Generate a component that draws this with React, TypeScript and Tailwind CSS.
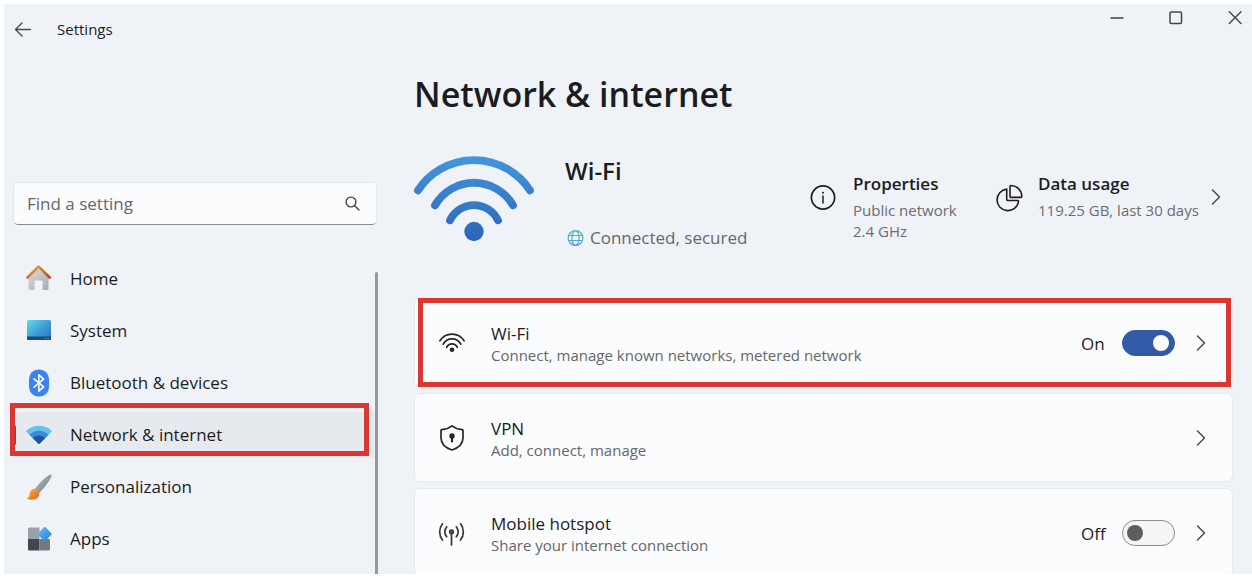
import type { ReactNode } from "react";

function HomeIcon() {
  return (
    <svg width="26" height="28" viewBox="0 0 26 28" aria-hidden="true">
      <defs>
        <linearGradient id="home-wall" x1="0" y1="0" x2="1" y2="1">
          <stop offset="0" stopColor="#dcdddf" />
          <stop offset="1" stopColor="#a9abae" />
        </linearGradient>
        <linearGradient id="home-roof" x1="0" y1="0" x2="1" y2="1">
          <stop offset="0" stopColor="#f0a63c" />
          <stop offset="1" stopColor="#c4421f" />
        </linearGradient>
      </defs>
      <path d="M2.500 12.500 12.500 3l10 9.500v11a1.500 1.500 0 0 1-1.500 1.500h-4.500v-8.500a1 1 0 0 0-1-1h-6a1 1 0 0 0-1 1V25H4A1.500 1.500 0 0 1 2.500 23.500z" fill="url(#home-wall)" />
      <path d="M1.500 12.500 11.800 2.100a1 1 0 0 1 1.400 0L23.700 12.500" fill="none" stroke="url(#home-roof)" strokeWidth="2.600" strokeLinecap="round" />
    </svg>
  );
}

function SystemIcon() {
  return (
    <svg width="26" height="26" viewBox="0 0 26 26" aria-hidden="true">
      <defs>
        <linearGradient id="system-screen" x1="0" y1="0" x2="1" y2="1">
          <stop offset="0" stopColor="#5fdde4" />
          <stop offset="0.500" stopColor="#3f9fd4" />
          <stop offset="1" stopColor="#2c6fc4" />
        </linearGradient>
      </defs>
      <rect x="1" y="2" width="24" height="20" rx="1.500" fill="url(#system-screen)" />
      <path d="M1 18.500h24v2a1.500 1.500 0 0 1-1.500 1.500h-21A1.500 1.500 0 0 1 1 20.500z" fill="#1b4c75" />
      <path d="M18.500 20.300h1.500M21.300 20.300h1.500" stroke="#6fb4dc" strokeWidth="0.800" />
    </svg>
  );
}

function BluetoothIcon() {
  return (
    <svg width="26" height="28" viewBox="0 0 26 28" aria-hidden="true">
      <rect x="3" y="0.500" width="20" height="27" rx="9.500" fill="#3b82f4" />
      <path d="M8 9.800l9.600 8-4.800 4.400V5.800l4.800 4.400-9.600 8" fill="none" stroke="#fff" strokeWidth="1.600" strokeLinejoin="round" strokeLinecap="round" />
    </svg>
  );
}

function NetworkIcon() {
  return (
    <svg width="26" height="26" viewBox="0 0 26 26" aria-hidden="true">
      <defs>
        <clipPath id="network-fan">
          <path d="M.500 8.600C3.800 5.400 8.200 3.700 13 3.700s9.200 1.700 12.500 4.900a.8.800 0 0 1 0 1.200L13.800 21.500a1.100 1.100 0 0 1-1.600 0L.500 9.800a.8.800 0 0 1 0-1.200z" />
        </clipPath>
      </defs>
      <g clipPath="url(#network-fan)">
        <rect width="26" height="26" fill="#63c3ee" />
        <circle cx="13" cy="22" r="13.300" fill="#3a8cd8" />
        <circle cx="13" cy="22" r="8.600" fill="#2653a0" />
      </g>
    </svg>
  );
}

function BrushIcon() {
  return (
    <svg width="26" height="26" viewBox="0 0 26 26" aria-hidden="true">
      <defs>
        <linearGradient id="brush-handle" x1="0" y1="0" x2="1" y2="1">
          <stop offset="0" stopColor="#c3c7cc" />
          <stop offset="1" stopColor="#6c7178" />
        </linearGradient>
        <linearGradient id="brush-tip" x1="0" y1="0" x2="1" y2="1">
          <stop offset="0" stopColor="#f8be45" />
          <stop offset="1" stopColor="#dc5a22" />
        </linearGradient>
      </defs>
      <path d="M8.800 15.300C13 9.300 18.500 3.500 23.800.700c1.200-.5 2.200.4 1.700 1.600-2.300 5.400-7.200 11.700-12.500 16.700z" fill="url(#brush-handle)" />
      <path d="M8.300 14.700c2.800 0 5 2.200 5 4.800 0 3.800-3.200 6.200-7.300 6.200-2 0-4-.4-5.300-1.300 1.800-.6 2.500-1.600 2.800-4.200.3-3.300 2-5.500 4.800-5.500z" fill="url(#brush-tip)" />
    </svg>
  );
}

function AppsIcon() {
  return (
    <svg width="26" height="26" viewBox="0 0 26 26" aria-hidden="true">
      <defs>
        <linearGradient id="apps-diamond" x1="0" y1="0" x2="1" y2="1">
          <stop offset="0" stopColor="#62c4f5" />
          <stop offset="1" stopColor="#2a7bd8" />
        </linearGradient>
      </defs>
      <path d="M3.500 1.500h10v11.500H2V3A1.500 1.500 0 0 1 3.500 1.500z" fill="#9aa0a8" />
      <path d="M2 13h11.500v11.500h-10A1.500 1.500 0 0 1 2 23z" fill="#43474d" />
      <path d="M13.500 13H24v10a1.500 1.500 0 0 1-1.500 1.500h-9z" fill="#747981" />
      <path d="M17.900 1.300a1.100 1.100 0 0 1 1.600 0l5.800 5.900a1.100 1.100 0 0 1 0 1.600l-5.800 5.900a1.100 1.100 0 0 1-1.600 0l-5.800-5.900a1.100 1.100 0 0 1 0-1.600z" fill="url(#apps-diamond)" />
    </svg>
  );
}

function LargeWifiIcon() {
  return (
    <svg className="shrink-0" width="120" height="86" viewBox="0 0 120 86" aria-hidden="true">
      <defs>
        <linearGradient id="wifi-fade" gradientUnits="userSpaceOnUse" x1="0" y1="0" x2="0" y2="86">
          <stop offset="0" stopColor="#4596de" />
          <stop offset="1" stopColor="#2b64b6" />
        </linearGradient>
      </defs>
      <g fill="none" stroke="url(#wifi-fade)" strokeWidth="7.800" strokeLinecap="round">
        <path d="M4 34.300A67 67 0 0 1 116 34.300" />
        <path d="M21 49.300A45 45 0 0 1 99 49.300" />
        <path d="M36 64.300A26.500 26.500 0 0 1 84 64.300" />
      </g>
      <circle cx="60" cy="75.500" r="9.700" fill="url(#wifi-fade)" />
    </svg>
  );
}

function GlobeIcon() {
  return (
    <svg width="17" height="17" viewBox="0 0 17 17" aria-hidden="true">
      <defs>
        <linearGradient id="globe-fade" gradientUnits="userSpaceOnUse" x1="0" y1="0" x2="0" y2="17">
          <stop offset="0" stopColor="#4cbfa4" />
          <stop offset="1" stopColor="#4a9fe0" />
        </linearGradient>
      </defs>
      <g fill="none" stroke="url(#globe-fade)" strokeWidth="1.200">
        <circle cx="8.500" cy="8" r="7.400" />
        <ellipse cx="8.500" cy="8" rx="3.600" ry="7.400" />
        <path d="M1.500 5.500h14M1.500 10.500h14" />
      </g>
    </svg>
  );
}

function InfoIcon() {
  return (
    <svg width="26" height="26" viewBox="0 0 26 26" fill="none" stroke="#1d1d1f" aria-hidden="true">
      <circle cx="13" cy="13.500" r="11.600" strokeWidth="1.700" />
      <path d="M13 12v7" strokeWidth="1.500" strokeLinecap="round" />
      <circle cx="13" cy="8.800" r="1" fill="#1d1d1f" stroke="none" />
    </svg>
  );
}

function PieIcon() {
  return (
    <svg width="28" height="28" viewBox="0 0 28 28" fill="none" stroke="#1d1d1f" strokeWidth="1.600" strokeLinejoin="round" aria-hidden="true">
      <path d="M15.900 1.500a11 11 0 0 1 10.900 11 .9.900 0 0 1-.9.900H15.900a.9.900 0 0 1-.9-.9V2.400a.9.900 0 0 1 .9-.9z" />
      <path d="M11.700 5.100A10.800 10.800 0 1 0 23.500 17.600c.1-.6-.300-1.100-.9-1.100H12.600a.9.900 0 0 1-.9-.9V5.100z" />
    </svg>
  );
}

function WifiIcon() {
  return (
    <svg width="28" height="28" viewBox="0 0 28 28" fill="none" stroke="#262626" strokeWidth="1.700" strokeLinecap="round" aria-hidden="true">
      <path d="M1.900 11.800A14.200 14.200 0 0 1 26.100 11.800" />
      <path d="M5.200 15.200A9.900 9.900 0 0 1 22.800 15.200" />
      <path d="M8.600 18.300A6 6 0 0 1 19.400 18.300" />
      <circle cx="14" cy="20.800" r="2.300" fill="#262626" stroke="none" />
    </svg>
  );
}

function ShieldIcon() {
  return (
    <svg width="28" height="28" viewBox="0 0 28 28" aria-hidden="true">
      <path d="M14 1.800c3.200 2.500 6.500 3.600 10.200 3.800a.8.800 0 0 1 .8.800v7.300c0 6-3.400 9.700-11 12.300C6.400 23.400 3 19.700 3 13.700V6.400a.8.800 0 0 1 .8-.8C7.500 5.400 10.800 4.300 14 1.800z" fill="none" stroke="#262626" strokeWidth="1.700" strokeLinejoin="round" />
      <circle cx="14" cy="12" r="2.700" fill="#262626" />
      <path d="M14 12v5.500" stroke="#262626" strokeWidth="2.200" strokeLinecap="round" />
    </svg>
  );
}

function HotspotIcon() {
  return (
    <svg width="28" height="28" viewBox="0 0 28 28" fill="none" stroke="#363636" strokeWidth="1.700" strokeLinecap="round" aria-hidden="true">
      <path d="M4.500 4.800a13 13 0 0 0 0 16.200M22.500 4.800a13 13 0 0 1 0 16.200" />
      <path d="M8.700 7.800a8.300 8.300 0 0 0 0 10M18.300 7.800a8.300 8.300 0 0 1 0 10" />
      <circle cx="13.500" cy="12.800" r="1.800" fill="#6b6b6b" />
      <path d="M13.500 15.500v10.500" />
    </svg>
  );
}

function ChevronIcon() {
  return (
    <svg width="10" height="18" viewBox="0 0 10 18" fill="none" stroke="#4a4a4a" strokeWidth="1.500" strokeLinecap="round" strokeLinejoin="round" aria-hidden="true">
      <path d="M1.500 2l7 7-7 7" />
    </svg>
  );
}

const navItems: { label: string; icon: ReactNode; current?: boolean }[] = [
  { label: "Home", icon: <HomeIcon /> },
  { label: "System", icon: <SystemIcon /> },
  { label: "Bluetooth & devices", icon: <BluetoothIcon /> },
  { label: "Network & internet", icon: <NetworkIcon />, current: true },
  { label: "Personalization", icon: <BrushIcon /> },
  { label: "Apps", icon: <AppsIcon /> },
];

function TitleBar() {
  return (
    <header className="flex h-[50px] shrink-0 items-start justify-between px-2.5">
      <div className="flex h-[50px] items-center gap-[25px]">
        <button type="button" aria-label="Back">
          <svg width="18" height="16" viewBox="0 0 18 16" fill="none" stroke="#4a4a4a" strokeWidth="1.400" strokeLinecap="round" strokeLinejoin="round" aria-hidden="true">
            <path d="M16.500 8.500H1.500M8 2L1.500 8.500 8 15" />
          </svg>
        </button>
        <span className="text-[15px] leading-5">Settings</span>
      </div>
      <div className="flex h-7 items-center gap-[45px]">
        <button type="button" aria-label="Minimize">
          <svg width="14" height="14" viewBox="0 0 14 14" aria-hidden="true">
            <path d="M1 7h12" stroke="#444" strokeWidth="1.500" strokeLinecap="round" />
          </svg>
        </button>
        <button type="button" aria-label="Maximize">
          <svg width="14" height="14" viewBox="0 0 14 14" aria-hidden="true">
            <rect x="1" y="1" width="11.500" height="11.500" rx="1.200" fill="none" stroke="#444" strokeWidth="1.500" />
          </svg>
        </button>
        <button type="button" aria-label="Close">
          <svg width="14" height="14" viewBox="0 0 14 14" aria-hidden="true">
            <path d="M1.300 .8l11.700 11.700M13 .8L1.300 12.500" stroke="#444" strokeWidth="1.400" strokeLinecap="round" />
          </svg>
        </button>
      </div>
    </header>
  );
}

function Sidebar() {
  return (
    <aside className="flex w-[374px] shrink-0 flex-col pt-32 pl-[9px]">
      <div className="mr-px flex h-[43px] shrink-0 items-center rounded-[5px] border border-[#e2e7ed] border-b-[#87898d] bg-[#fbfcfe] pr-4 pl-[13px]">
        <input type="text" aria-label="Find a setting" placeholder="Find a setting" className="min-w-0 flex-1 bg-transparent text-[17px] leading-6 outline-none placeholder:text-[#65676a]" />
        <svg width="15" height="15" viewBox="0 0 15 15" fill="none" stroke="#454545" strokeWidth="1.400" strokeLinecap="round" aria-hidden="true">
          <circle cx="6" cy="6" r="4.900" />
          <path d="M9.700 9.700l4.300 4.300" />
        </svg>
      </div>
      <nav className="relative mt-[31px] flex min-h-0 flex-1 flex-col gap-1.5">
        {navItems.map((item) => (
          <a
            key={item.label}
            href="#"
            aria-current={item.current ? "page" : undefined}
            className={
              item.current
                ? "relative flex h-[46px] shrink-0 items-center gap-[18px] rounded-md bg-[#e6eaef] pl-[13px]"
                : "flex h-[46px] shrink-0 items-center gap-[18px] rounded-md pl-[13px]"
            }
          >
            {item.current && (
              <>
                <span className="absolute left-0 h-5 w-[3px] rounded-full bg-[#335aa6]" />
                <span className="absolute -top-[9px] right-[9px] bottom-0.5 -left-[3px] border-5 border-[#d93832]" />
              </>
            )}
            {item.icon}
            <span className="text-[17px] leading-6">{item.label}</span>
          </a>
        ))}
        <span className="absolute top-4 right-0 bottom-0 w-[3px] rounded-t-full bg-[#96999d]" />
      </nav>
    </aside>
  );
}

function StatusSummary() {
  return (
    <section className="mt-10 flex items-start">
      <LargeWifiIcon />
      <div className="ml-[31px] flex flex-1 flex-col gap-10">
        <h2 className="text-2xl leading-[30px] font-semibold">Wi-Fi</h2>
        <p className="flex items-center gap-1.5 pl-0.5 text-[17px] leading-6 text-[#65676a]">
          <GlobeIcon />
          Connected, secured
        </p>
      </div>
      <a href="#" className="flex items-start gap-[17px] pt-4">
        <span className="pt-3">
          <InfoIcon />
        </span>
        <span className="flex w-[142px] flex-col">
          <span className="text-[17px] leading-6 font-semibold">Properties</span>
          <span className="mt-1 text-[15px] leading-[21px] text-[#6b6d70]">
            Public network
            <br />
            2.4 GHz
          </span>
        </span>
      </a>
      <a href="#" className="mr-3 flex items-start gap-[15px] pt-4">
        <span className="pt-3">
          <PieIcon />
        </span>
        <span className="flex w-[158px] flex-col whitespace-nowrap">
          <span className="text-[17px] leading-6 font-semibold">Data usage</span>
          <span className="mt-1 text-[15px] leading-[21px] text-[#6b6d70]">119.25 GB, last 30 days</span>
        </span>
        <span className="pt-4">
          <ChevronIcon />
        </span>
      </a>
    </section>
  );
}

type RowProps = {
  title: string;
  detail: string;
  icon: ReactNode;
  on?: boolean;
  highlighted?: boolean;
};

function SettingRow({ title, detail, icon, on, highlighted }: RowProps) {
  return (
    <li className="relative flex h-[89px] shrink-0 items-center rounded-md border border-[#e5e9f0] bg-[#fbfcfe] pr-[26px] pl-[23px]">
      {icon}
      <div className="ml-[25px] flex flex-1 flex-col pt-1">
        <span className="text-[17px] leading-[22px]">{title}</span>
        <span className="text-[15px] leading-[21px] text-[#65676a]">{detail}</span>
      </div>
      {on !== undefined && (
        <label className="mr-[21px] flex items-center">
          <span className="w-[41px] pt-0.5 text-[17px] leading-6">{on ? "On" : "Off"}</span>
          <input
            type="checkbox"
            role="switch"
            aria-label={title}
            defaultChecked={on}
            className="flex h-[26px] w-[53px] appearance-none items-center rounded-full border border-[#8c8c8c] bg-[#f4f5f6] px-1 before:block before:size-4 before:rounded-full before:bg-[#5e5e5e] checked:justify-end checked:border-[#335aa6] checked:bg-[#335aa6] checked:px-[5px] checked:before:bg-white"
          />
        </label>
      )}
      <button type="button" aria-label={`Open ${title}`}>
        <ChevronIcon />
      </button>
      {highlighted && <span className="pointer-events-none absolute -top-px right-px -bottom-px left-[3px] border-5 border-[#d93832]" />}
    </li>
  );
}

export default function App() {
  return (
    <div className="h-screen overflow-hidden bg-white pt-1 pb-1.5 pl-1 font-['Open_Sans','Noto_Sans',sans-serif] text-[#1c1c1e]">
      <div className="flex h-full flex-col overflow-hidden bg-[#eff3f8]">
        <TitleBar />
        <div className="flex min-h-0 flex-1">
          <Sidebar />
          <main className="flex min-w-0 flex-1 flex-col pt-[18px] pr-[19px] pl-9">
            <h1 className="text-[34px] leading-[44px] font-semibold">Network &amp; internet</h1>
            <StatusSummary />
            <ul className="mt-12 flex flex-col gap-1.5">
              <SettingRow title="Wi-Fi" detail="Connect, manage known networks, metered network" icon={<WifiIcon />} on={true} highlighted />
              <SettingRow title="VPN" detail="Add, connect, manage" icon={<ShieldIcon />} />
              <SettingRow title="Mobile hotspot" detail="Share your internet connection" icon={<HotspotIcon />} on={false} />
            </ul>
          </main>
        </div>
      </div>
    </div>
  );
}
